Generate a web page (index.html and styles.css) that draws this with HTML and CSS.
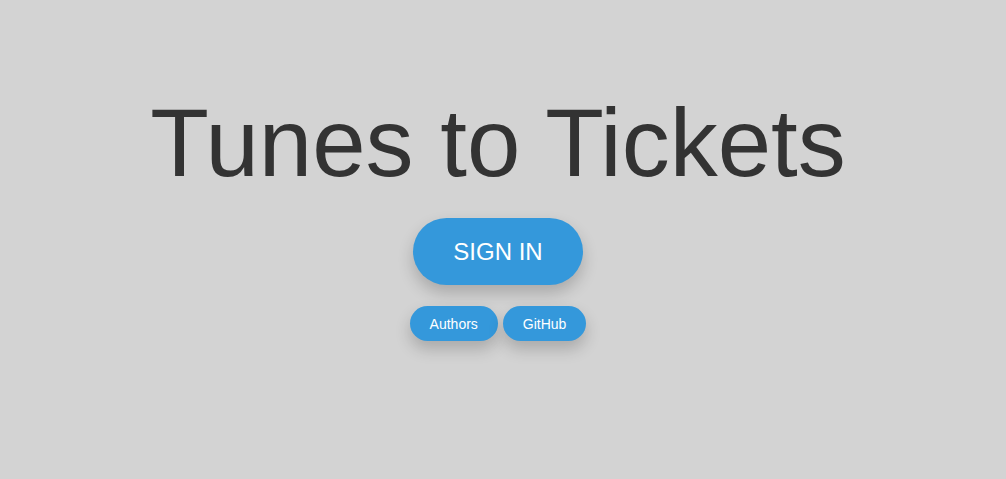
FILE: index.html
```html
<!DOCTYPE html>
<html>
<head>
<meta charset="utf-8">
<link rel="stylesheet" href="styles.css">
</head>
<body>
<main class="hero">
  <h1 class="title">Tunes to Tickets</h1>
  <button class="btn btn-large">SIGN IN</button>
  <div class="links">
    <button class="btn btn-small">Authors</button>
    <button class="btn btn-small">GitHub</button>
  </div>
</main>
</body>
</html>
```
FILE: styles.css
```css
html, body {
  margin: 0;
  padding: 0;
  background: #d3d3d3;
  font-family: "Liberation Sans", Arial, sans-serif;
}
.hero {
  display: flex;
  flex-direction: column;
  align-items: center;
  padding: 84px 10px 40px 0;
}
.title {
  margin: 0;
  font-size: 96px;
  font-weight: normal;
  color: #333333;
  line-height: 118px;
}
.btn {
  border: none;
  background: #3498db;
  color: #ffffff;
  font-family: "Liberation Sans", Arial, sans-serif;
  box-shadow: 0 8px 16px rgba(0, 0, 0, 0.2);
  cursor: pointer;
}
.btn-large {
  margin-top: 16px;
  width: 170px;
  height: 67px;
  border-radius: 34px;
  font-size: 24px;
}
.links {
  display: flex;
  gap: 5px;
  margin-top: 21px;
}
.btn-small {
  height: 35px;
  border-radius: 18px;
  font-size: 14px;
  padding: 0 20px;
}
```
